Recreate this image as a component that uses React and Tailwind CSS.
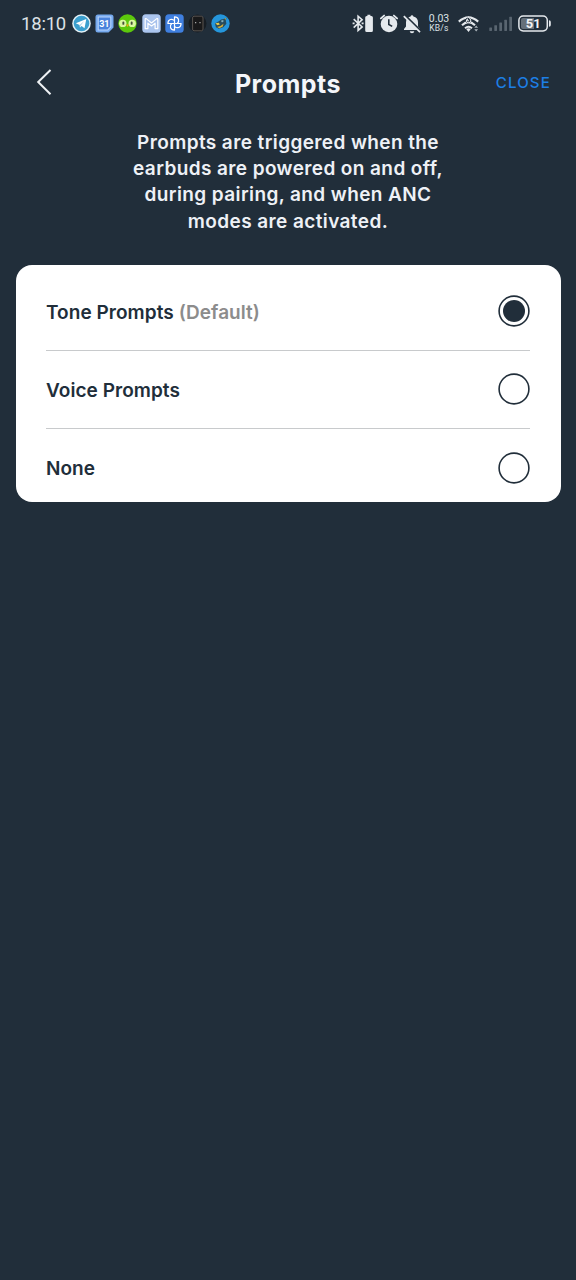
import React from 'react';

function Telegram() {
  return (
    <svg className="size-[19px]" viewBox="0 0 19 19">
      <circle cx="9.5" cy="9.5" r="9.3" fill="#e4f1f7" />
      <circle cx="9.5" cy="9.5" r="7.8" fill="#3b9fce" />
      <path d="M3.8 9.3 14.3 5.1 12.5 14.2 9.6 12.1 8 13.6 7.6 11z" fill="#fff" />
      <path d="M7.6 11 12.3 7.1 8.7 11.5 8 13.6z" fill="#a9d3e8" />
    </svg>
  );
}

function Calendar() {
  return (
    <svg className="size-[19px]" viewBox="0 0 19 19">
      <path d="M3 .5h13a2.5 2.5 0 0 1 2.5 2.5v10.5l-5 5H3A2.5 2.5 0 0 1 .5 16V3A2.5 2.5 0 0 1 3 .5z" fill="#75a9ee" />
      <path d="M3.2 3h12.6v9.8L12.8 16H3.2z" fill="#4a83dc" stroke="#b9d6fb" strokeWidth="1.1" />
      <text x="9.3" y="12.8" textAnchor="middle" className="font-['Roboto'] text-[9px] font-bold" fill="#fff">31</text>
    </svg>
  );
}

function Owl() {
  return (
    <svg className="size-[19px]" viewBox="0 0 19 19">
      <circle cx="9.5" cy="9.5" r="9.2" fill="#5cc80c" />
      <rect x="1.1" y="5.8" width="7.4" height="7.2" rx="3.6" fill="#d9f7a0" />
      <rect x="10.5" y="5.8" width="7.4" height="7.2" rx="3.6" fill="#d9f7a0" />
      <rect x="4.4" y="7.6" width="1.9" height="3.2" rx=".9" fill="#45513b" />
      <rect x="12.7" y="7.6" width="1.9" height="3.2" rx=".9" fill="#45513b" />
      <path d="M7.9 10.5h3.2l-1.6 2.6z" fill="#f3a51b" />
    </svg>
  );
}

function Mail() {
  return (
    <svg className="size-[19px]" viewBox="0 0 19 19">
      <rect x=".3" y=".3" width="18.4" height="18.4" rx="3.5" fill="#abc5ee" />
      <path d="M3.2 14.6V5.2q0-1 1-.6L9.5 9l5.3-4.4q1-.4 1 .6v9.4h-2.7V9.2L9.5 12 5.9 9.2v5.4z" fill="#a5c0ec" stroke="#fff" strokeWidth="1.2" strokeLinejoin="round" />
    </svg>
  );
}

function Pinwheel() {
  return (
    <svg className="size-[19px]" viewBox="0 0 19 19">
      <rect x=".3" y=".3" width="18.4" height="18.4" rx="3.5" fill="#3f7fdf" />
      <g fill="none" stroke="#fff" strokeWidth="1.2" strokeLinejoin="round">
        <path d="M9.5 9.5V2.9c4.4 0 5.2 4.3 2.8 6.6" />
        <path d="M9.5 9.5h6.6c0 4.4-4.3 5.2-6.6 2.8" />
        <path d="M9.5 9.5v6.6c-4.4 0-5.2-4.3-2.8-6.6" />
        <path d="M9.5 9.5H2.9c0-4.4 4.3-5.2 6.6-2.8" />
      </g>
    </svg>
  );
}

function DarkApp() {
  return (
    <svg className="size-[19px]" viewBox="0 0 19 19">
      <circle cx="9.5" cy="9.5" r="9" fill="#171d23" />
      <path d="M6 2.2h7.4l1.6 1v12.6l-1.4 1H6l-1.4-1V3.3z" fill="#19191a" stroke="#766d66" strokeWidth=".7" />
      <circle cx="7.7" cy="8.7" r=".6" fill="#ddd" />
      <circle cx="12" cy="8.7" r=".6" fill="#ddd" />
    </svg>
  );
}

function BlueApp() {
  return (
    <svg className="size-[19px]" viewBox="0 0 19 19">
      <circle cx="9.5" cy="9.5" r="9.2" fill="#2596dc" />
      <path d="M4 9.5 8.2 7 10 5.4l2.7-.4 2.8-1.5-.7 3 .6 3.2-3.1 3.5-4.5 1.6-2.9-1.6z" fill="#284c5e" />
      <path d="m4.4 9.2 3.4-.5 1.1 1.9-2.6.7z" fill="#e2c94e" />
      <path d="m6 12.9 3.5-.8 3-2.4-.7 2.8-3.4 1.7z" fill="#d4af3b" />
      <path d="m9.9 6.8 2.2-.8.6 1.3-1.7 1.1z" fill="#87b2bc" />
      <path d="m13.5 4.6 1.3-.6-.3 1.9z" fill="#e2c94e" />
    </svg>
  );
}

function Bluetooth() {
  return (
    <svg className="h-[19px] w-[22px]" viewBox="0 0 22 19">
      <path d="m1.7 5.2 8.4 7.7-4 3.5V2.2l4 3.5-8.4 7.9" fill="none" stroke="#e5e9ed" strokeWidth="1.6" />
      <path d="M.6 9.4h2M9.6 9.4h2" stroke="#e5e9ed" strokeWidth="1.6" />
      <path d="M15.4.8h3v1.3h1q1.5 0 1.5 1.5v12.9q0 1.6-1.5 1.6h-4.7q-1.5 0-1.5-1.6V3.6q0-1.5 1.5-1.5h.7z" fill="#e5e9ed" />
    </svg>
  );
}

function Alarm() {
  return (
    <svg className="h-[19px] w-[20px]" viewBox="0 0 20 19">
      <path d="M1.9 4.4 5.1 1.6M18.1 4.4l-3.2-2.8" stroke="#e5e9ed" strokeWidth="1.9" strokeLinecap="round" />
      <circle cx="10" cy="10" r="8.3" fill="#e5e9ed" />
      <path d="M9.8 5.3v5.2l3.4 1.9" fill="none" stroke="#212e3a" strokeWidth="1.6" />
    </svg>
  );
}

function BellOff() {
  return (
    <svg className="h-[20px] w-[18px]" viewBox="0 0 18 20">
      <path d="M9 1.2q1.2 0 1.4 1.3Q15 3.6 15 8.3v4.2l2 2.6v1H1v-1l2-2.6V8.3q0-4.7 4.6-5.8Q7.8 1.2 9 1.2zM6.7 17.2h4.6Q11 19.2 9 19.2t-2.3-2z" fill="#e5e9ed" />
      <path d="m1.9 1.2 16 15.8" stroke="#212e3a" strokeWidth="2" />
      <path d="m.8 2.2 16.2 16" stroke="#e5e9ed" strokeWidth="1.7" />
    </svg>
  );
}

function Wifi() {
  return (
    <svg className="h-[18px] w-[22px]" viewBox="0 0 22 18">
      <g fill="none" stroke="#e5e9ed">
        <path d="M.8 6.6Q10.5-2 20.2 6.6" strokeWidth="2.1" />
        <path d="M4 10.2q6.5-6 13 0" strokeWidth="2.1" />
        <path d="M7 13.2q3.5-3 7 0" strokeWidth="2" />
      </g>
      <circle cx="10.5" cy="5.4" r="2.9" fill="#212e3a" />
      <path d="M10 1.8q4 3 2.3 5.2-1.9 1.6-3.6-.2-.8-1.6.6-2.6.4 1.8 1.6 1.8" fill="none" stroke="#e5e9ed" strokeWidth="1.1" />
      <path d="m8.2 14.1 2.3 2.9 2.3-2.9q-2.3-1.5-4.6 0z" fill="#e5e9ed" />
      <path d="m16.3 12.8 1.9-2.2 1.9 2.2zM16.3 14.2h3.8l-1.9 2.2z" fill="#aab3ba" />
    </svg>
  );
}

function Signal() {
  return (
    <svg className="h-[16px] w-[24px]" viewBox="0 0 24 16" fill="#596570">
      <rect x=".3" y="11.6" width="2.7" height="3.4" rx=".4" />
      <rect x="5.3" y="9.2" width="2.7" height="5.8" rx=".4" />
      <rect x="10.3" y="6.6" width="2.7" height="8.4" rx=".4" />
      <rect x="15.3" y="3.8" width="2.7" height="11.2" rx=".4" />
      <rect x="20.3" y=".8" width="2.7" height="14.2" rx=".4" />
    </svg>
  );
}

function Battery() {
  return (
    <svg className="h-[17px] w-[34px]" viewBox="0 0 34 17">
      <path d="M5 3h11v11H5q-2 0-2-2V5q0-2 2-2z" fill="#65707a" />
      <rect x=".9" y=".9" width="28.4" height="15" rx="4.3" fill="none" stroke="#e5e9ed" strokeWidth="1.5" />
      <path d="M31 5.2q1.8.3 1.8 1.8v3q0 1.5-1.8 1.8z" fill="#e5e9ed" />
      <text x="15.3" y="13" textAnchor="middle" className="font-['Roboto'] text-[13px] font-bold" fill="#f1f3f5">51</text>
    </svg>
  );
}

function StatusBar() {
  return (
    <div className="flex h-[47px] items-center pl-[21px] pr-[24px]">
      <span className="w-[51px] whitespace-nowrap pt-[1px] font-['Roboto'] text-[18.5px] leading-none tracking-[-0.2px] text-[#dde2e6]">18:10</span>
      <div className="flex gap-[4.2px]">
        <Telegram />
        <Calendar />
        <Owl />
        <Mail />
        <Pinwheel />
        <DarkApp />
        <BlueApp />
      </div>
      <div className="ml-auto flex items-center">
        <Bluetooth />
        <div className="ml-[5px]"><Alarm /></div>
        <div className="ml-[4px]"><BellOff /></div>
        <div className="ml-[7px] flex w-[22px] flex-col items-center whitespace-nowrap font-['Roboto'] text-[#dde2e6]">
          <span className="text-[10.5px] leading-[10px]">0.03</span>
          <span className="text-[8.5px] leading-[9px] tracking-[0.2px]">KB/s</span>
        </div>
        <div className="ml-[8px]"><Wifi /></div>
        <div className="ml-[9px]"><Signal /></div>
        <div className="ml-[5px]"><Battery /></div>
      </div>
    </div>
  );
}

function Radio({ checked }) {
  return (
    <svg className="size-[32px]" viewBox="0 0 32 32" fill="none">
      <circle cx="16" cy="16" r="14.9" stroke="#212e3a" strokeWidth="1.6" />
      {checked && <circle cx="16" cy="16" r="11" fill="#212e3a" />}
    </svg>
  );
}

const options = [
  { label: 'Tone Prompts', note: '(Default)', checked: true },
  { label: 'Voice Prompts' },
  { label: 'None' },
];

export default function App() {
  return (
    <div className="flex min-h-[1280px] w-[576px] flex-col bg-[#212e3a] font-['Inter',sans-serif]">
      <StatusBar />
      <header className="grid h-[72px] grid-cols-3 items-center px-[25px]">
        <svg className="ml-[11px] h-[28px] w-[17px]" viewBox="0 0 17 28" fill="none" stroke="#eef1f4" strokeWidth="2">
          <path d="M14.5 1 2.2 13 14.5 25.3" />
        </svg>
        <h1 className="justify-self-center pt-[2px] text-[25px] font-bold leading-none tracking-[0.5px] text-[#f4f6fa]">Prompts</h1>
        <button className="justify-self-end pb-[2px] text-[15px] font-medium leading-none tracking-[1.2px] text-[#1d7fe5]">CLOSE</button>
      </header>
      <p className="mt-[11px] text-center text-[19px] font-semibold leading-[26.2px] tracking-[0.4px] text-[#eef1f6]">
        Prompts are triggered when the<br />
        earbuds are powered on and off,<br />
        during pairing, and when ANC<br />
        modes are activated.
      </p>
      <main className="mx-[15.5px] mt-[30px] h-[237px] rounded-[16px] bg-white px-[30.5px] pt-[8px]">
        {options.map((option) => (
          <div key={option.label} className="flex h-[78px] items-center justify-between border-b border-[#c8cacc] last:border-b-0">
            <span className="pt-[3px] text-[19px] font-semibold tracking-[0.05px] text-[#212e3a]">
              {option.label}
              {option.note && <span className="text-[#8c8c8c]"> {option.note}</span>}
            </span>
            <Radio checked={option.checked} />
          </div>
        ))}
      </main>
    </div>
  );
}
